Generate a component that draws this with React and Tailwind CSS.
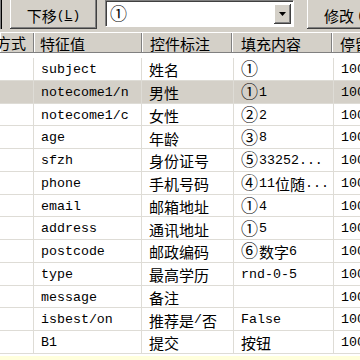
import React from 'react';

const rows = [
  ['subject', '姓名', '①'],
  ['notecome1/n', '男性', '①1'],
  ['notecome1/c', '女性', '②2'],
  ['age', '年龄', '③8'],
  ['sfzh', '身份证号', '⑤33252...'],
  ['phone', '手机号码', '④11位随...'],
  ['email', '邮箱地址', '①4'],
  ['address', '通讯地址', '①5'],
  ['postcode', '邮政编码', '⑥数字6'],
  ['type', '最高学历', 'rnd-0-5'],
  ['message', '备注', ''],
  ['isbest/on', '推荐是/否', 'False'],
  ['B1', '提交', '按钮'],
];

// ascii runs in mono, circled digits a bit larger, the rest in the CJK face
function Txt({ s }) {
  const parts = s.match(/[\x00-\x7f]+|[\u2460-\u2473]+|[^\x00-\x7f\u2460-\u2473]+/g) || [];
  return parts.map((p, i) => {
    if (/^[\x00-\x7f]/.test(p))
      return <span key={i} className="font-['Liberation_Mono',monospace] text-[13.3px]">{p}</span>;
    if (/^[\u2460-\u2473]/.test(p))
      return <span key={i} className="relative -top-[2px] mr-[1px] font-['Noto_Sans_CJK_SC',sans-serif] text-[17px]">{p}</span>;
    return <span key={i} className="font-['Noto_Sans_CJK_SC',sans-serif] text-[15px]">{p}</span>;
  });
}

function HeadCell({ w, children, className = '' }) {
  return (
    <div
      className={`flex h-full shrink-0 items-center overflow-hidden whitespace-nowrap border-t border-white shadow-[inset_-1px_-1px_0_#808080,inset_1px_0_0_#ffffff] ${w} ${className}`}
    >
      {children}
    </div>
  );
}

function Cell({ w, children }) {
  return (
    <div className={`flex h-full shrink-0 items-center overflow-hidden whitespace-nowrap border-r border-[#dedcd6] pl-[7px] pt-[2px] leading-none ${w}`}>
      {children}
    </div>
  );
}

export default function App() {
  return (
    <div className="flex h-[360px] w-[360px] flex-col overflow-hidden bg-white text-black">
      {/* toolbar */}
      <div className="flex h-[32px] shrink-0 items-start bg-[#d4d0c8]">
        <div className="h-[29px] w-[2px] border-r border-black bg-[#808080]" />
        <div className="ml-[8px] flex h-[29px] w-[87px] items-center justify-center whitespace-nowrap pt-[1px] shadow-[inset_-1px_-1px_0_#404040,inset_1px_0_0_#ffffff,inset_-2px_-2px_0_#808080]">
          <span className="font-['Noto_Sans_CJK_SC',sans-serif] text-[15px] leading-none">下移</span>
          <span className="font-['Liberation_Mono',monospace] text-[13px] leading-none">
            (<span className="underline">L</span>)
          </span>
        </div>
        <div className="ml-[8px] flex h-[26px] w-[188px] items-center border-l border-t border-[#808080] bg-white shadow-[inset_1px_1px_0_#404040,1px_1px_0_#ffffff]">
          <div className="flex flex-1 items-center pl-[4px] pt-[1px] leading-none">
            <Txt s="①" />
          </div>
          <div className="mr-[2px] flex h-[20px] w-[17px] items-center justify-center bg-[#d4d0c8] shadow-[inset_-1px_-1px_0_#404040,inset_1px_1px_0_#ffffff,inset_-2px_-2px_0_#808080]">
            <svg width="7" height="4" viewBox="0 0 7 4">
              <path d="M0 0h7L3.5 4z" fill="#000" />
            </svg>
          </div>
        </div>
        <div className="ml-[14px] flex h-[29px] min-w-0 flex-1 items-center overflow-hidden whitespace-nowrap pl-[17px] pt-[1px] shadow-[inset_0_-1px_0_#404040,inset_1px_0_0_#ffffff,inset_0_-2px_0_#808080]">
          <span className="shrink-0 font-['Noto_Sans_CJK_SC',sans-serif] text-[15px] leading-none">修改</span>
          <span className="ml-[3px] shrink-0 font-['Liberation_Mono',monospace] text-[13px] leading-none">(</span>
        </div>
      </div>

      {/* header */}
      <div className="flex h-[21px] shrink-0 bg-[#d4d0c8] leading-none">
        <HeadCell w="w-[34px]">
          <span className="-ml-[4px]"><Txt s="方式" /></span>
        </HeadCell>
        <HeadCell w="w-[108px]" className="pl-[6px]"><Txt s="特征值" /></HeadCell>
        <HeadCell w="w-[90px]" className="pl-[8px]"><Txt s="控件标注" /></HeadCell>
        <HeadCell w="w-[100px]" className="pl-[9px]"><Txt s="填充内容" /></HeadCell>
        <HeadCell w="w-[40px]" className="pl-[8px]"><Txt s="停留" /></HeadCell>
      </div>

      <div className="h-[5px] shrink-0 bg-white" />

      {/* rows */}
      {rows.map((r, i) => (
        <div
          key={i}
          className={`flex h-[22.75px] shrink-0 border-b border-[#dedcd6] ${i === 1 ? 'bg-[#d4d0c8]' : 'bg-white'}`}
        >
          <Cell w="w-[34px]" />
          <Cell w="w-[108px]"><Txt s={r[0]} /></Cell>
          <Cell w="w-[92px]"><Txt s={r[1]} /></Cell>
          <Cell w="w-[100px]"><Txt s={r[2]} /></Cell>
          <Cell w="w-[40px]"><Txt s="1000" /></Cell>
        </div>
      ))}

      <div className="h-[2px] shrink-0 bg-white" />
      <div className="flex-1 bg-[#ffffdc]" />
    </div>
  );
}
